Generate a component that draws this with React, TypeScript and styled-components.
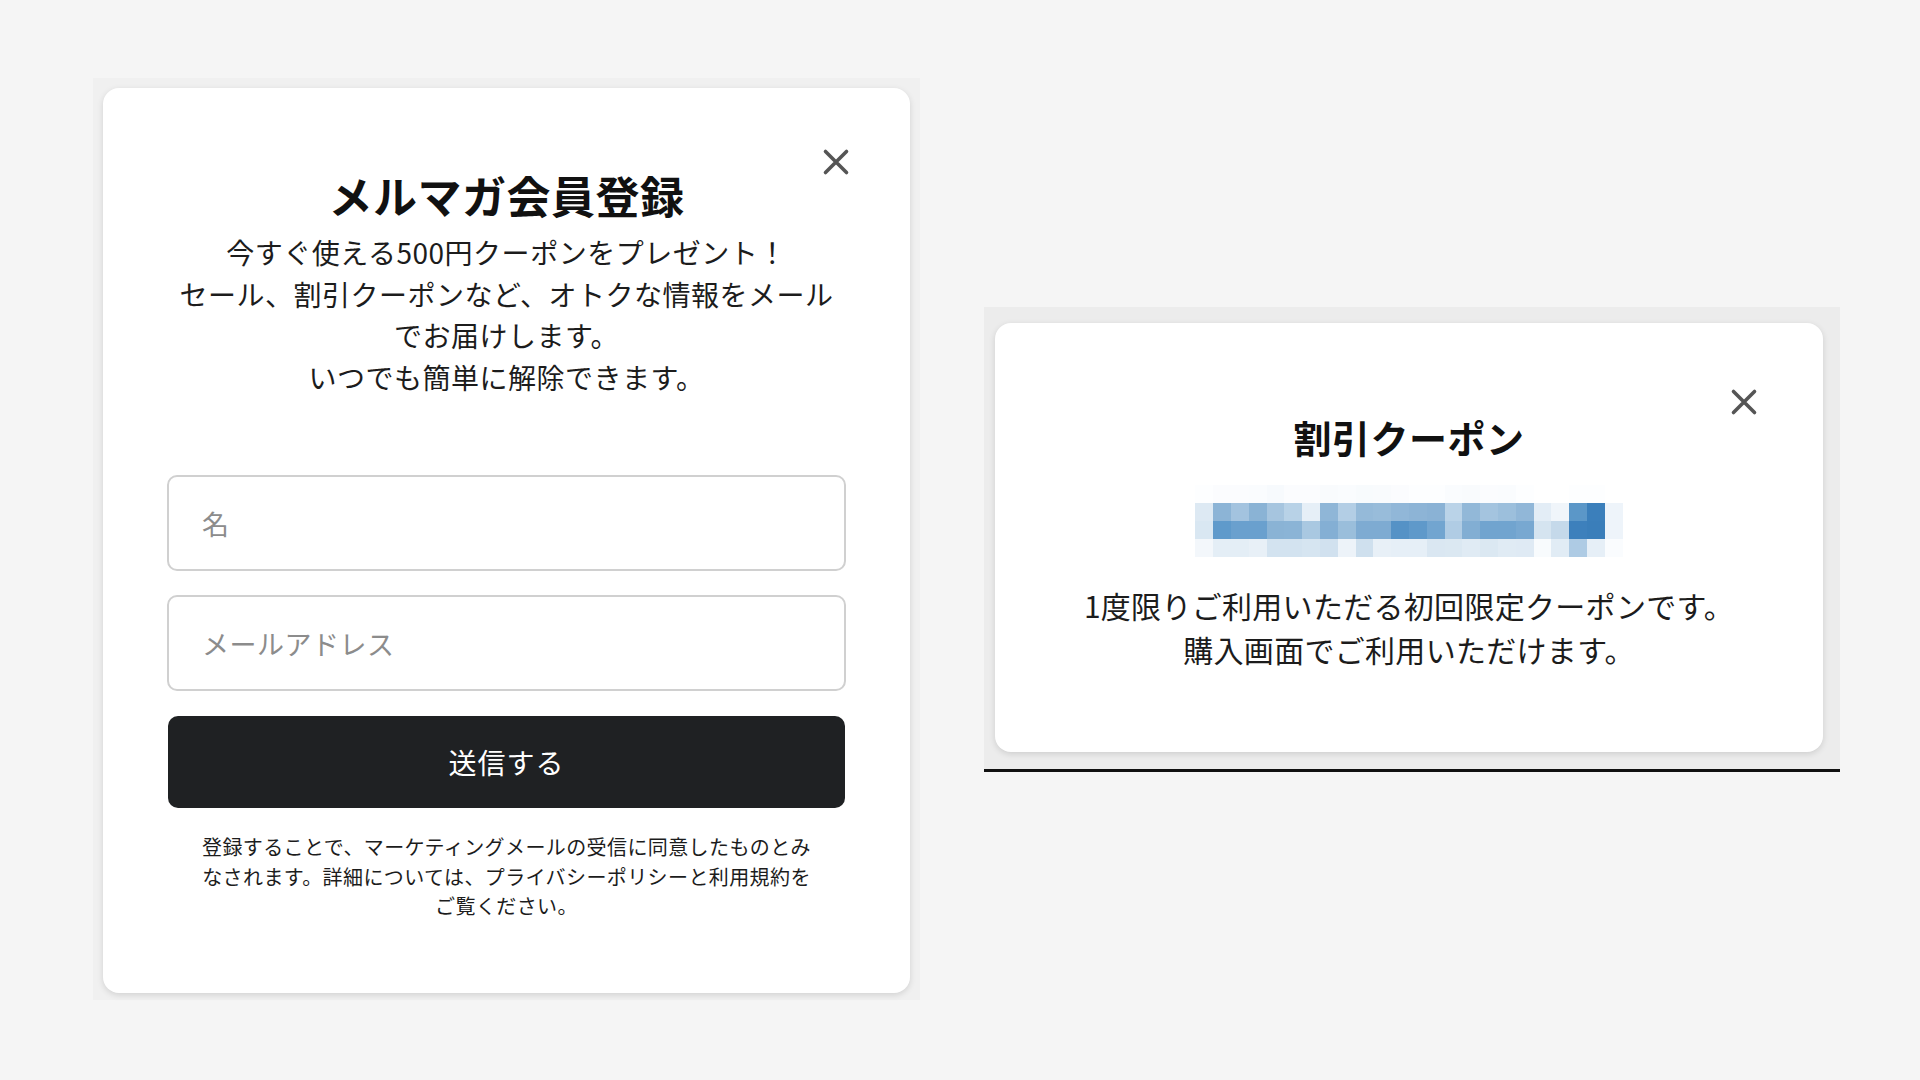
import React from "react";
import styled, { createGlobalStyle } from "styled-components";

const GlobalStyle = createGlobalStyle`
  html, body {
    margin: 0;
    padding: 0;
    background: #f5f5f5;
  }
  body {
    font-family: "Noto Sans CJK JP", "Noto Sans", sans-serif;
    color: #1a1a1a;
  }
  * { box-sizing: border-box; }
`;

const Page = styled.div`
  width: 1920px;
  height: 1080px;
  display: flex;
  align-items: flex-start;
  gap: 64px;
  padding: 78px 0 0 93px;
  overflow: hidden;
`;

const Frame = styled.div<{ $tone: string; $pad: string; $top?: number; $line?: boolean }>`
  background: ${(p) => p.$tone};
  padding: ${(p) => p.$pad};
  margin-top: ${(p) => p.$top ?? 0}px;
  border-bottom: ${(p) => (p.$line ? "3px solid #111" : "none")};
`;

const Card = styled.div<{ $w: number; $pad: string }>`
  position: relative;
  width: ${(p) => p.$w}px;
  background: #fff;
  border-radius: 16px;
  box-shadow: 0 2px 6px rgba(0, 0, 0, 0.13);
  padding: ${(p) => p.$pad};
  display: flex;
  flex-direction: column;
  align-items: center;
`;

const CloseButton = styled.button<{ $top: number; $right: number }>`
  position: absolute;
  top: ${(p) => p.$top}px;
  right: ${(p) => p.$right}px;
  width: 28px;
  height: 28px;
  padding: 0;
  border: none;
  background: transparent;
  display: flex;
  align-items: center;
  justify-content: center;
  cursor: pointer;
`;

const Title = styled.h2<{ $size: number; $lh: number }>`
  margin: 0;
  font-size: ${(p) => p.$size}px;
  line-height: ${(p) => p.$lh}px;
  font-weight: 700;
  color: #111;
  letter-spacing: 0.5px;
  text-align: center;
`;

const Lead = styled.p`
  margin: 9px 0 0;
  font-size: 28px;
  line-height: 41.5px;
  letter-spacing: 0.5px;
  color: #1c1c1c;
  text-align: center;
`;

const Form = styled.form`
  width: 100%;
  margin-top: 77px;
  display: flex;
  flex-direction: column;
  gap: 24px;
`;

const Field = styled.input`
  width: 100%;
  height: 96px;
  border: 2px solid #d0d0d0;
  border-radius: 10px;
  padding: 0 33px;
  font-family: "Noto Sans CJK JP", "Noto Sans", sans-serif;
  font-size: 27px;
  letter-spacing: 0.5px;
  color: #222;
  background: #fff;
  outline: none;
  &::placeholder {
    color: #8c8c8c;
  }
`;

const Submit = styled.button`
  margin: 1px 1px 0;
  height: 92px;
  border: none;
  border-radius: 10px;
  background: #1f2123;
  color: #fff;
  font-family: "Noto Sans CJK JP", "Noto Sans", sans-serif;
  font-size: 28px;
  letter-spacing: 1px;
  cursor: pointer;
`;

const Fine = styled.p`
  margin: 24px 0 0;
  font-size: 20px;
  line-height: 29.5px;
  letter-spacing: 0.4px;
  color: #1c1c1c;
  text-align: center;
`;

const Mosaic = styled.div`
  margin-top: 23px;
  display: grid;
  grid-template-columns: repeat(24, 17.8px);
  grid-auto-rows: 18px;
  filter: blur(0.7px);
`;

const Cell = styled.div<{ $c: string }>`
  background: ${(p) => p.$c};
`;

const Body = styled.p`
  margin: 26px 0 0;
  font-size: 30px;
  line-height: 44px;
  letter-spacing: 0.3px;
  color: #1c1c1c;
  text-align: center;
`;

const CloseIcon = () => (
  <svg width="28" height="28" viewBox="0 0 28 28" aria-hidden="true">
    <path d="M3.5 3.5 L24.5 24.5 M24.5 3.5 L3.5 24.5" stroke="#555" strokeWidth="3.6" strokeLinecap="round" fill="none" />
  </svg>
);

const rows: string[][] = [
  ["#fdfeff", "#fbfcfe", "#fbfcfe", "#fafcfe", "#f7fafd", "#fbfcfe", "#fbfcfe", "#f9fbfd", "#fafcfe", "#f8fbfd", "#f9fbfd", "#fbfcfe", "#fdfeff", "#fdfeff", "#fafcfe", "#f9fbfd", "#fbfcfe", "#fafcfe", "#fdfeff", "#fff", "#fff", "#fdfeff", "#fdfeff", "#fff"],
  ["#dde9f3", "#8cb4d6", "#a3c3df", "#8ab3d5", "#a6c5df", "#b8d2e7", "#e6eff7", "#8fb6d7", "#b3cee5", "#95bad9", "#98bcda", "#91b7d8", "#8db4d6", "#8ab2d5", "#bad3e8", "#92b8d8", "#a4c4df", "#9cbfdc", "#91b7d8", "#e3edf6", "#f0f5fa", "#5b97c8", "#3b7fbb", "#eef4fa"],
  ["#d9e7f2", "#5f9acb", "#6aa0ce", "#6aa0ce", "#8ab3d5", "#8bb4d6", "#a9c8e1", "#84afd4", "#9abedb", "#7eabd2", "#7eabd2", "#5592c6", "#5f99ca", "#72a5d0", "#b0cce4", "#82aed3", "#71a4cf", "#71a4cf", "#78a8d1", "#d5e4f0", "#c5d9ea", "#3d80bc", "#3a7eba", "#eef4fa"],
  ["#f3f7fb", "#e4eef6", "#e4eef6", "#e8f0f7", "#d3e3f0", "#d3e3f0", "#d6e5f1", "#d1e1ef", "#edf3f9", "#cfe0ee", "#e8f0f7", "#e6eff7", "#e6eff7", "#dae7f2", "#dbe8f2", "#e0ebf4", "#dbe8f2", "#e0ebf4", "#dfeaf4", "#f8fbfd", "#e1ecf5", "#aecbe4", "#e6eff7", "#fafcfe"],
];

export default function App() {
  return (
    <>
      <GlobalStyle />
      <Page>
        <Frame $tone="#f0f0f0" $pad="10px 10px 7px 10px">
          <Card $w={807} $pad="79px 64px 72px">
            <CloseButton type="button" $top={60} $right={60} aria-label="閉じる">
              <CloseIcon />
            </CloseButton>
            <Title $size={44} $lh={56}>メルマガ会員登録</Title>
            <Lead>
              今すぐ使える500円クーポンをプレゼント！
              <br />
              セール、割引クーポンなど、オトクな情報をメール
              <br />
              でお届けします。
              <br />
              いつでも簡単に解除できます。
            </Lead>
            <Form onSubmit={(e) => e.preventDefault()}>
              <Field type="text" placeholder="名" />
              <Field type="email" placeholder="メールアドレス" />
              <Submit type="submit">送信する</Submit>
            </Form>
            <Fine>
              登録することで、マーケティングメールの受信に同意したものとみ
              <br />
              なされます。詳細については、プライバシーポリシーと利用規約を
              <br />
              ご覧ください。
            </Fine>
          </Card>
        </Frame>

        <Frame $tone="#ececec" $pad="16px 17px 17px 11px" $top={229} $line>
          <Card $w={828} $pad="89px 40px 81px">
            <CloseButton type="button" $top={65} $right={65} aria-label="閉じる">
              <CloseIcon />
            </CloseButton>
            <Title $size={38} $lh={50}>割引クーポン</Title>
            <Mosaic aria-label="クーポンコード">
              {rows.map((r, ri) => r.map((c, ci) => <Cell key={`${ri}-${ci}`} $c={c} />))}
            </Mosaic>
            <Body>
              1度限りご利用いただる初回限定クーポンです。
              <br />
              購入画面でご利用いただけます。
            </Body>
          </Card>
        </Frame>
      </Page>
    </>
  );
}
